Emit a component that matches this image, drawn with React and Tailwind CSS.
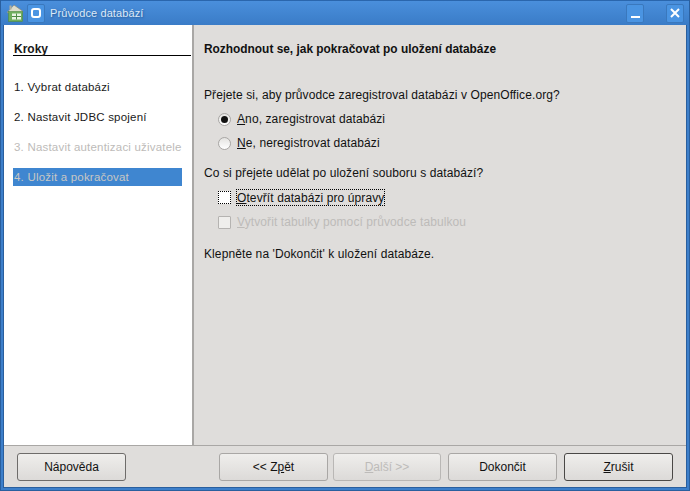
import React from "react";

const font = { fontFamily: '"Liberation Sans", Arial, sans-serif' };

function Btn({ children, cls = "", w = "w-[109px]" }) {
  return (
    <button className={`h-[28px] ${w} rounded-[3px] border bg-gradient-to-b from-[#efeeec] to-[#dcdad8] text-[12px] flex items-center justify-center ${cls}`}>
      {children}
    </button>
  );
}

function Radio({ on }) {
  return (
    <span className="w-[13px] h-[13px] rounded-full border border-[#a8a6a4] bg-gradient-to-b from-[#e4e3e1] to-white flex items-center justify-center shrink-0">
      {on && <span className="w-[7px] h-[7px] rounded-full bg-[#111]" />}
    </span>
  );
}

export default function App() {
  return (
    <div style={font} className="w-[690px] h-[491px] flex flex-col bg-[#3d7fca] overflow-hidden border-x border-b border-[#2a5f9e]">
      <div className="h-[25px] shrink-0 bg-gradient-to-b from-[#4a8fdc] to-[#3a7cc7] flex items-center pl-[6px] pr-[5px] border-t border-[#2a66ad]">
        <svg width="16" height="18" viewBox="0 0 16 18" className="shrink-0">
          <path d="M0.5 8 L7 1 L15.5 7 V9 H0.5 Z" fill="#dcdccc" stroke="#8a8a78" strokeWidth="0.7" />
          <rect x="2.5" y="1.5" width="2" height="4" fill="#b0b09e" />
          <rect x="1.5" y="7.5" width="14" height="10" fill="#6fae5c" stroke="#4f8a44" strokeWidth="0.6" />
          <rect x="5" y="9.5" width="9" height="6" fill="#e8f3e2" />
          <path d="M5 12.5 H14 M9.5 9.5 V15.5" stroke="#4f8a44" strokeWidth="1" />
        </svg>
        <span className="w-[18px] h-[19px] ml-[4px] rounded-[2px] bg-[#4a94e2] border border-[#3a78bd] flex items-center justify-center shrink-0">
          <span className="w-[10px] h-[10px] rounded-[3px] border-[2.5px] border-white" />
        </span>
        <span className="ml-[5px] text-[11px] text-[#dce9f7] tracking-[0.1px] [text-shadow:1px_1px_2px_#2a5f9e]">Průvodce databází</span>
        <span className="ml-auto w-[18px] h-[19px] rounded-[2px] bg-[#4a94e2] border border-[#3a78bd] flex items-end justify-center pb-[4px] shrink-0">
          <span className="w-[9px] h-[2px] bg-white" />
        </span>
        <span className="ml-[22px] w-[18px] h-[19px] rounded-[2px] bg-[#4a94e2] border border-[#3a78bd] flex items-center justify-center shrink-0">
          <svg width="10" height="10" viewBox="0 0 10 10"><path d="M1 1 L9 9 M9 1 L1 9" stroke="white" strokeWidth="2" /></svg>
        </span>
      </div>

      <div className="flex-1 mx-[2px] mb-[2px] flex flex-col bg-[#dfdddb] min-h-0 border-x border-b border-[#2a5f9e]">
        <div className="flex-1 flex min-h-0 border-b border-[#a9a7a5]">
          <aside className="w-[190px] shrink-0 bg-white border-r-2 border-[#a9a7a5] pl-[9px] pr-[1px] text-[11.5px] text-[#1a1a1a]">
            <div className="h-[31px] border-b border-black flex items-end pl-px font-bold text-[12px] leading-[12px]">Kroky</div>
            <div className="mt-[22px] pl-px h-[18px] leading-[18px] tracking-[0.2px]">1. Vybrat databázi</div>
            <div className="mt-[12px] pl-px h-[18px] leading-[18px] tracking-[0.2px]">2. Nastavit JDBC spojení</div>
            <div className="mt-[12px] pl-px h-[18px] leading-[18px] tracking-[0.2px] text-[#bdbbb9]">3. Nastavit autentizaci uživatele</div>
            <div className="mt-[12px] pl-px w-[169px] h-[18px] leading-[18px] tracking-[0.2px] bg-[#3f86d0] text-[#c8c6c4]">4. Uložit a pokračovat</div>
          </aside>
          <main className="flex-1 pl-[10px] text-[12px] text-[#111]">
            <div className="mt-[15px] h-[18px] leading-[18px] font-bold text-[11.9px]">Rozhodnout se, jak pokračovat po uložení databáze</div>
            <div className="mt-[28px] h-[18px] leading-[18px] tracking-[0.1px]">Přejete si, aby průvodce zaregistroval databázi v OpenOffice.org?</div>
            <label className="mt-[6px] ml-[14px] h-[18px] flex items-center gap-[6px] leading-[18px] tracking-[0.1px]">
              <Radio on />
              <span><u>A</u>no, zaregistrovat databázi</span>
            </label>
            <label className="mt-[6px] ml-[14px] h-[18px] flex items-center gap-[6px] leading-[18px] tracking-[0.1px]">
              <Radio />
              <span><u>N</u>e, neregistrovat databázi</span>
            </label>
            <div className="mt-[12px] h-[18px] leading-[18px] tracking-[0.1px]">Co si přejete udělat po uložení souboru s databází?</div>
            <label className="mt-[6px] ml-[14px] h-[18px] flex items-center gap-[6px] leading-[17px] tracking-[0.1px]">
              <span className="w-[13px] h-[13px] bg-white border border-dotted border-black shrink-0" />
              <span className="border border-dotted border-black -ml-px h-[17px]"><u>O</u>tevřít databázi pro úpravy</span>
            </label>
            <label className="mt-[7px] ml-[14px] h-[18px] flex items-center gap-[6px] leading-[18px] tracking-[0.1px] text-[#bdbbb9]">
              <span className="w-[13px] h-[13px] bg-[#efeeec] border border-[#b5b3b1] rounded-[1px] shrink-0" />
              <span><u>V</u>ytvořit tabulky pomocí průvodce tabulkou</span>
            </label>
            <div className="mt-[14px] h-[18px] leading-[18px] tracking-[0.1px]">Klepněte na 'Dokončit' k uložení databáze.</div>
          </main>
        </div>
        <div className="h-[41px] shrink-0 flex items-center pl-[13px] pr-[13px] text-[#111]">
          <Btn cls="border-[#6e6c6a]">Nápověda</Btn>
          <Btn cls="ml-[93px] border-[#a9a7a5]">&lt;&lt; Z<u>p</u>ět</Btn>
          <Btn w="w-[108px]" cls="ml-[5px] border-[#b9b7b5] text-[#bdbbb9]"><span><u>D</u>alší &gt;&gt;</span></Btn>
          <Btn cls="ml-[7px] border-[#a9a7a5]">Dokončit</Btn>
          <Btn cls="ml-[7px] border-[#4a4846]"><span><u>Z</u>rušit</span></Btn>
        </div>
      </div>
    </div>
  );
}
